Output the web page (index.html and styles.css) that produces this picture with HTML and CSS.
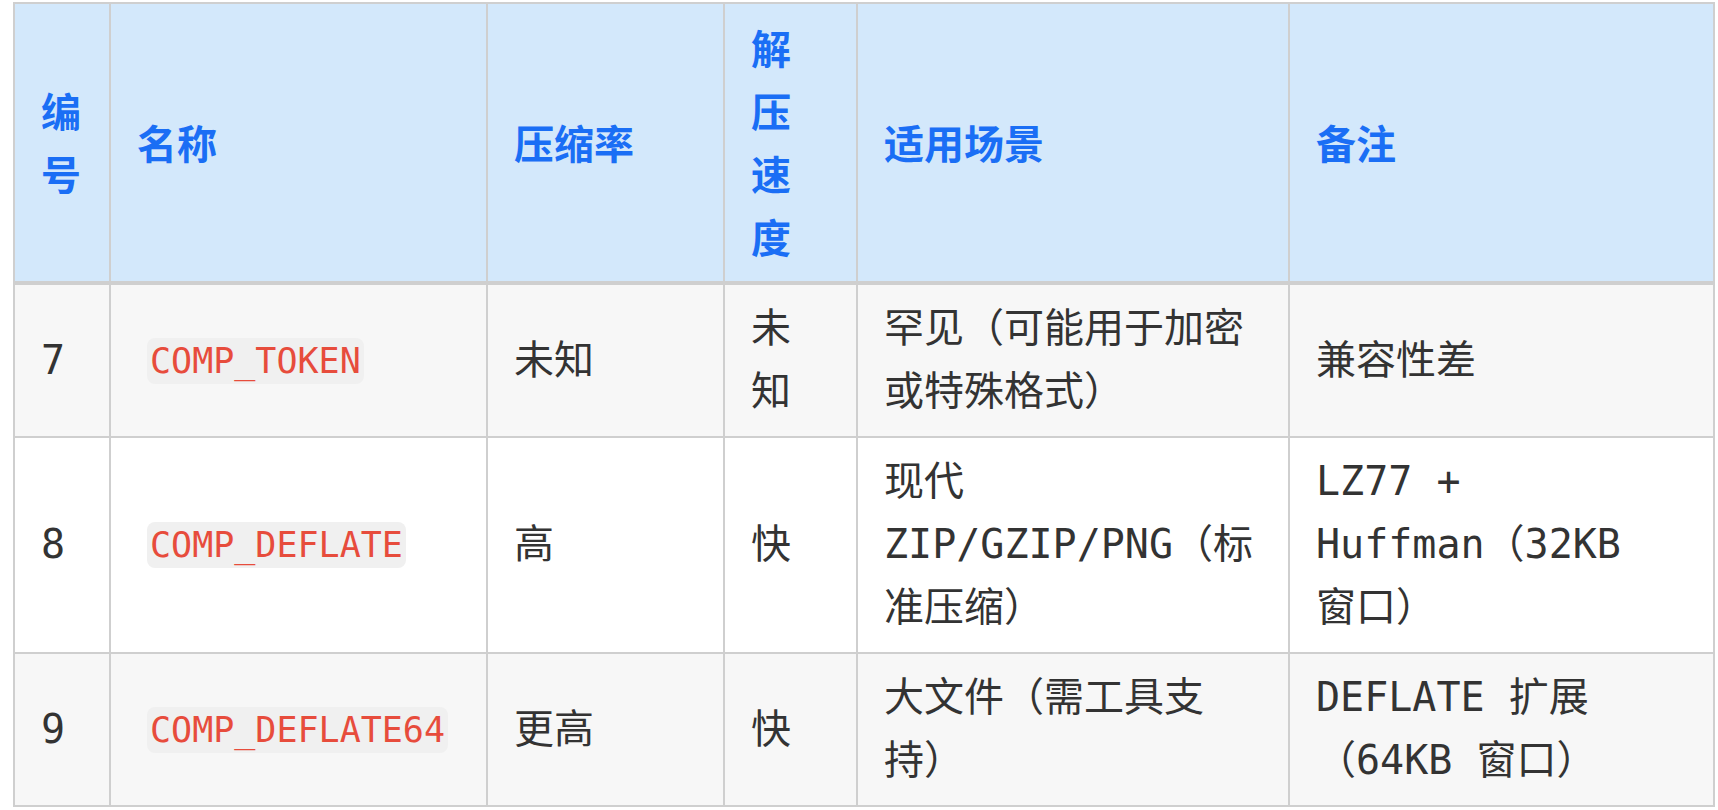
FILE: index.html
```html
<!DOCTYPE html>
<html lang="zh-CN">
<head>
<meta charset="utf-8">
<title>压缩方式</title>
<link rel="stylesheet" href="styles.css">
</head>
<body>
<table class="grid">
  <thead>
    <tr>
      <th class="c1">编号</th>
      <th class="c2">名称</th>
      <th class="c3">压缩率</th>
      <th class="c4">解压速度</th>
      <th class="c5">适用场景</th>
      <th class="c6">备注</th>
    </tr>
  </thead>
  <tbody>
    <tr class="odd">
      <td>7</td>
      <td><code class="code">COMP_TOKEN</code></td>
      <td>未知</td>
      <td>未知</td>
      <td>罕见（可能用于加密或特殊格式）</td>
      <td class="note">兼容性差</td>
    </tr>
    <tr>
      <td>8</td>
      <td><code class="code">COMP_DEFLATE</code></td>
      <td>高</td>
      <td>快</td>
      <td>现代 ZIP/GZIP/PNG（标准压缩）</td>
      <td class="note">LZ77 + Huffman（32KB 窗口）</td>
    </tr>
    <tr class="odd">
      <td>9</td>
      <td><code class="code">COMP_DEFLATE64</code></td>
      <td>更高</td>
      <td>快</td>
      <td>大文件（需工具支持）</td>
      <td class="note">DEFLATE 扩展（64KB 窗口）</td>
    </tr>
  </tbody>
</table>
</body>
</html>
```

FILE: styles.css
```css
html, body {
  margin: 0;
  background: #ffffff;
}

body {
  padding: 2px 0 0 13px;
}

.grid {
  box-sizing: border-box;
  width: 1702px;
  table-layout: fixed;
  border-collapse: separate;
  border-spacing: 0;
  border-top: 2px solid #cfcfcf;
  border-left: 2px solid #cfcfcf;
  font-family: "DejaVu Sans Mono", "Noto Sans CJK SC", monospace;
  font-size: 40px;
  line-height: 63px;
  color: #333333;
}

.grid th,
.grid td {
  box-sizing: border-box;
  padding: 12px 26px 13px 26px;
  border-right: 2px solid #cfcfcf;
  border-bottom: 2px solid #cfcfcf;
  text-align: left;
  vertical-align: middle;
}

.grid th {
  background: #d3e8fb;
  color: #1a6ef5;
  font-family: "Noto Sans CJK SC", sans-serif;
  font-weight: 700;
  border-bottom: 4px solid #cfcfcf;
}

.grid td.note {
  padding-right: 70px;
}

.c1 { width: 96px; }
.c2 { width: 377px; }
.c3 { width: 237px; }
.c4 { width: 133px; }
.c5 { width: 432px; }
.c6 { width: 425px; }

.grid tbody tr {
  background: #ffffff;
}

.grid tbody tr.odd {
  background: #f7f7f7;
}

.code {
  font-family: "DejaVu Sans Mono", monospace;
  font-size: 35px;
  color: #e74c3c;
  background: #f0f0f0;
  padding: 3px;
  margin-left: 10px;
  border-radius: 8px;
}
```
